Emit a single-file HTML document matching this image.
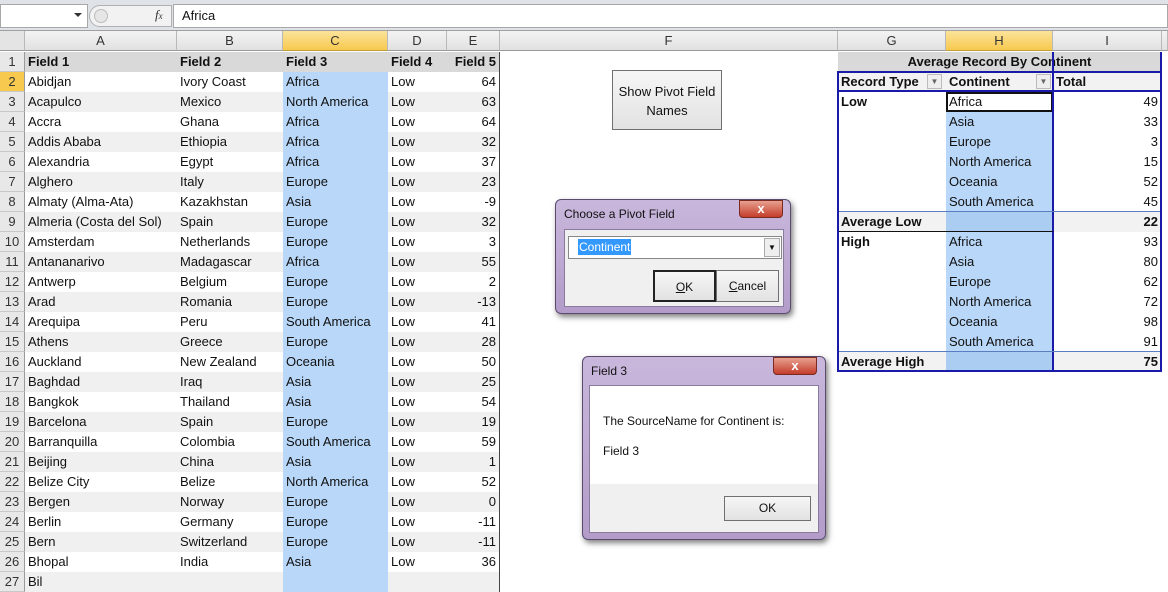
<!DOCTYPE html>
<html><head><meta charset="utf-8"><style>
*{box-sizing:border-box;margin:0;padding:0}
body{width:1168px;height:578px;overflow:hidden;background:#fff;font-family:"Liberation Sans",sans-serif;font-size:13px;color:#111;position:relative}
.abs{position:absolute}
.row{position:absolute;left:0;height:20px;width:1168px}
.c{position:absolute;top:0;height:20px;line-height:20px;padding:0 3px;white-space:nowrap;overflow:hidden}
.rh{left:0;width:25px;text-align:center;background:#e8e8e8;border-right:1px solid #9a9a9a;border-bottom:1px solid #c8c8c8;color:#333}
.A{left:25px;width:152px}.B{left:177px;width:106px}.C{left:283px;width:105px;background:#b9d7f8}.D{left:388px;width:59px}.E{left:447px;width:53px;text-align:right;border-right:1px solid #444}
.G{left:838px;width:108px}.H{left:946px;width:107px}.I{left:1053px;width:108px;text-align:right}
.g .A,.g .B,.g .D,.g .E{background:#f0f0f0}
.b{font-weight:bold}
.hdr{position:absolute;top:31px;height:20px;line-height:19px;text-align:center;background:linear-gradient(#f3f3f3,#e1e1e1);border-right:1px solid #b8b8b8;border-bottom:1px solid #9a9a9a;color:#333}
.dlg{position:absolute;border-radius:6px;background:linear-gradient(#c9b7dc,#b39cc9);border:1px solid #5a4a6e;box-shadow:2px 3px 6px rgba(0,0,0,.5)}
.x{position:absolute;width:44px;height:18px;border-radius:0 0 4px 4px;background:linear-gradient(#e8a090,#c43c2a);border:1px solid #7a2a20;color:#fff;font-weight:bold;text-align:center;line-height:15px;font-size:13px}
.btn{position:absolute;background:linear-gradient(#f6f6f6,#e2e2e2);border:1px solid #707070;text-align:center;font-size:12px}
</style></head><body>
<div class="abs" style="left:0;top:0;width:1168px;height:31px;background:#dfe3e8;border-bottom:1px solid #a0a0a0"></div>
<div class="abs" style="left:0;top:4px;width:88px;height:24px;background:#fff;border:1px solid #a8a8a8"></div>
<div class="abs" style="left:74px;top:13px;border-left:4px solid transparent;border-right:4px solid transparent;border-top:4px solid #333"></div>
<div class="abs" style="left:89px;top:5px;width:83px;height:22px;background:#f2f2f2;border-radius:11px 0 0 11px;border:1px solid #b0b0b0"></div>
<div class="abs" style="left:94px;top:9px;width:14px;height:14px;border-radius:7px;background:#e6e6e6;border:1px solid #bbb"></div>
<div class="abs" style="left:155px;top:7px;font-family:'Liberation Serif',serif;font-style:italic;font-size:13px;color:#333">f<span style="font-size:9px">x</span></div>
<div class="abs" style="left:173px;top:4px;width:995px;height:24px;background:#fff;border:1px solid #a8a8a8;line-height:22px;padding-left:8px;font-size:13px">Africa</div>
<div class="hdr" style="left:0;width:25px;background:#e4e4e4"></div>
<div class="hdr" style="left:25px;width:152px">A</div>
<div class="hdr" style="left:177px;width:106px">B</div>
<div class="hdr" style="left:283px;width:105px;background:linear-gradient(#fbe39a,#f7c94e);border-bottom:1px solid #c29b3a">C</div>
<div class="hdr" style="left:388px;width:59px">D</div>
<div class="hdr" style="left:447px;width:53px">E</div>
<div class="hdr" style="left:500px;width:338px">F</div>
<div class="hdr" style="left:838px;width:108px">G</div>
<div class="hdr" style="left:946px;width:107px;background:linear-gradient(#fbe39a,#f7c94e);border-bottom:1px solid #c29b3a">H</div>
<div class="hdr" style="left:1053px;width:109px">I</div>
<div class="hdr" style="left:1162px;width:6px"></div>

<div id="rows"></div>
<script>
var d=[["Field 1","Field 2","Field 3","Field 4","Field 5"],
["Abidjan","Ivory Coast","Africa","Low","64"],["Acapulco","Mexico","North America","Low","63"],["Accra","Ghana","Africa","Low","64"],["Addis Ababa","Ethiopia","Africa","Low","32"],["Alexandria","Egypt","Africa","Low","37"],["Alghero","Italy","Europe","Low","23"],["Almaty (Alma-Ata)","Kazakhstan","Asia","Low","-9"],["Almeria (Costa del Sol)","Spain","Europe","Low","32"],["Amsterdam","Netherlands","Europe","Low","3"],["Antananarivo","Madagascar","Africa","Low","55"],["Antwerp","Belgium","Europe","Low","2"],["Arad","Romania","Europe","Low","-13"],["Arequipa","Peru","South America","Low","41"],["Athens","Greece","Europe","Low","28"],["Auckland","New Zealand","Oceania","Low","50"],["Baghdad","Iraq","Asia","Low","25"],["Bangkok","Thailand","Asia","Low","54"],["Barcelona","Spain","Europe","Low","19"],["Barranquilla","Colombia","South America","Low","59"],["Beijing","China","Asia","Low","1"],["Belize City","Belize","North America","Low","52"],["Bergen","Norway","Europe","Low","0"],["Berlin","Germany","Europe","Low","-11"],["Bern","Switzerland","Europe","Low","-11"],["Bhopal","India","Asia","Low","36"],["Bil","","","",""]];
var p={1:["","","Total"],2:["Low","Africa","49"],3:["","Asia","33"],4:["","Europe","3"],5:["","North America","15"],6:["","Oceania","52"],7:["","South America","45"],8:["Average Low","","22"],9:["High","Africa","93"],10:["","Asia","80"],11:["","Europe","62"],12:["","North America","72"],13:["","Oceania","98"],14:["","South America","91"],15:["Average High","","75"]};
var h="";
for(var i=0;i<d.length;i++){var r=d[i],y=52+i*20;var cls=(i==0||i%2==0)?"row g":"row";
var st=i==0?"background:#d9d9d9;font-weight:bold":"";
h+='<div class="'+cls+'" style="top:'+y+'px"><div class="c rh" style="'+(i==1?"background:#f7c94e;":"")+'">'+(i+1)+'</div>';
h+='<div class="c A" style="'+st+'">'+r[0]+'</div><div class="c B" style="'+st+'">'+r[1]+'</div><div class="c C" style="'+st+'">'+r[2]+'</div><div class="c D" style="'+st+'">'+r[3]+'</div><div class="c E" style="'+st+'">'+r[4]+'</div>';
if(i==0){h+='<div class="c b" style="left:838px;width:323px;text-align:center;background:#d9d9d9">Average Record By Continent</div>';}
if(p[i]){var q=p[i],avg=(i==8||i==15),hd=i==1;
var bg=hd||avg?"background:#f2f2f2;":"";
h+='<div class="c G'+(q[0]&&i!=1?' b':'')+'" style="'+bg+(hd?'font-weight:bold':'')+'">'+(hd?'Record Type':q[0])+'</div>';
h+='<div class="c H" style="'+(hd?"background:#f2f2f2;font-weight:bold":avg?"background:#abcdf2":(i==2?"background:#fff;outline:2px solid #111;outline-offset:-2px":"background:#b9d7f8"))+'">'+(hd?'Continent':q[1])+'</div>';
h+='<div class="c I" style="'+bg+(hd||avg?'font-weight:bold;':'')+(hd?'text-align:left':'')+'">'+q[2]+'</div>';}
h+='</div>';}
document.getElementById("rows").innerHTML=h;
</script>
<div class="abs" style="left:927px;top:74px;width:15px;height:15px;background:#eee;border:1px solid #bbb;font-size:8px;text-align:center;line-height:13px;color:#666">▼</div>
<div class="abs" style="left:1036px;top:74px;width:15px;height:15px;background:#eee;border:1px solid #bbb;font-size:8px;text-align:center;line-height:13px;color:#666">▼</div>
<div class="abs" style="left:837px;top:71px;width:325px;height:301px;border:2px solid #1a1aa8"></div>
<div class="abs" style="left:1052px;top:52px;width:2px;height:320px;background:#1a1aa8"></div>
<div class="abs" style="left:1160px;top:52px;width:2px;height:20px;background:#1a1aa8"></div>
<div class="abs" style="left:837px;top:90px;width:325px;height:2px;background:#1a1aa8"></div>
<div class="abs" style="left:839px;top:211px;width:321px;height:1px;background:#5a7ec0"></div>
<div class="abs" style="left:839px;top:231px;width:214px;height:1px;background:#111"></div>
<div class="abs" style="left:839px;top:351px;width:321px;height:1px;background:#5a7ec0"></div>
<div class="btn" style="left:612px;top:70px;width:110px;height:60px;font-size:13px;line-height:19px;padding-top:11px">Show Pivot Field<br>Names</div>
<div class="dlg" style="left:555px;top:199px;width:236px;height:115px">
<div class="abs" style="left:8px;top:7px;font-size:12px">Choose a Pivot Field</div>
<div class="x" style="left:183px;top:0">x</div>
<div class="abs" style="left:8px;top:29px;width:220px;height:78px;background:#f0f0f0;border:1px solid #8a7a9e"></div>
<div class="abs" style="left:12px;top:36px;width:214px;height:23px;background:#fff;border:1px solid #888"></div>
<div class="abs" style="left:22px;top:39px;background:#3399ff;color:#fff;font-size:12px;padding:0 1px;line-height:16px">Continent</div>
<div class="abs" style="left:208px;top:38px;width:16px;height:19px;background:#eee;border:1px solid #aaa;font-size:8px;text-align:center;line-height:18px">▼</div>
<div class="btn" style="left:97px;top:70px;width:63px;height:32px;line-height:30px;border:2px solid #222"><u>O</u>K</div>
<div class="btn" style="left:160px;top:70px;width:63px;height:32px;line-height:30px"><u>C</u>ancel</div>
</div>
<div class="dlg" style="left:582px;top:356px;width:244px;height:184px">
<div class="abs" style="left:8px;top:7px;font-size:12px">Field 3</div>
<div class="x" style="left:190px;top:0">x</div>
<div class="abs" style="left:6px;top:28px;width:230px;height:148px;background:#fff;border:1px solid #8a7a9e"></div>
<div class="abs" style="left:7px;top:127px;width:228px;height:48px;background:#f0f0f0"></div>
<div class="abs" style="left:20px;top:57px;font-size:12px">The SourceName for Continent is:</div>
<div class="abs" style="left:20px;top:87px;font-size:12px">Field 3</div>
<div class="btn" style="left:141px;top:139px;width:87px;height:25px;line-height:23px">OK</div>
</div>
</body></html>
